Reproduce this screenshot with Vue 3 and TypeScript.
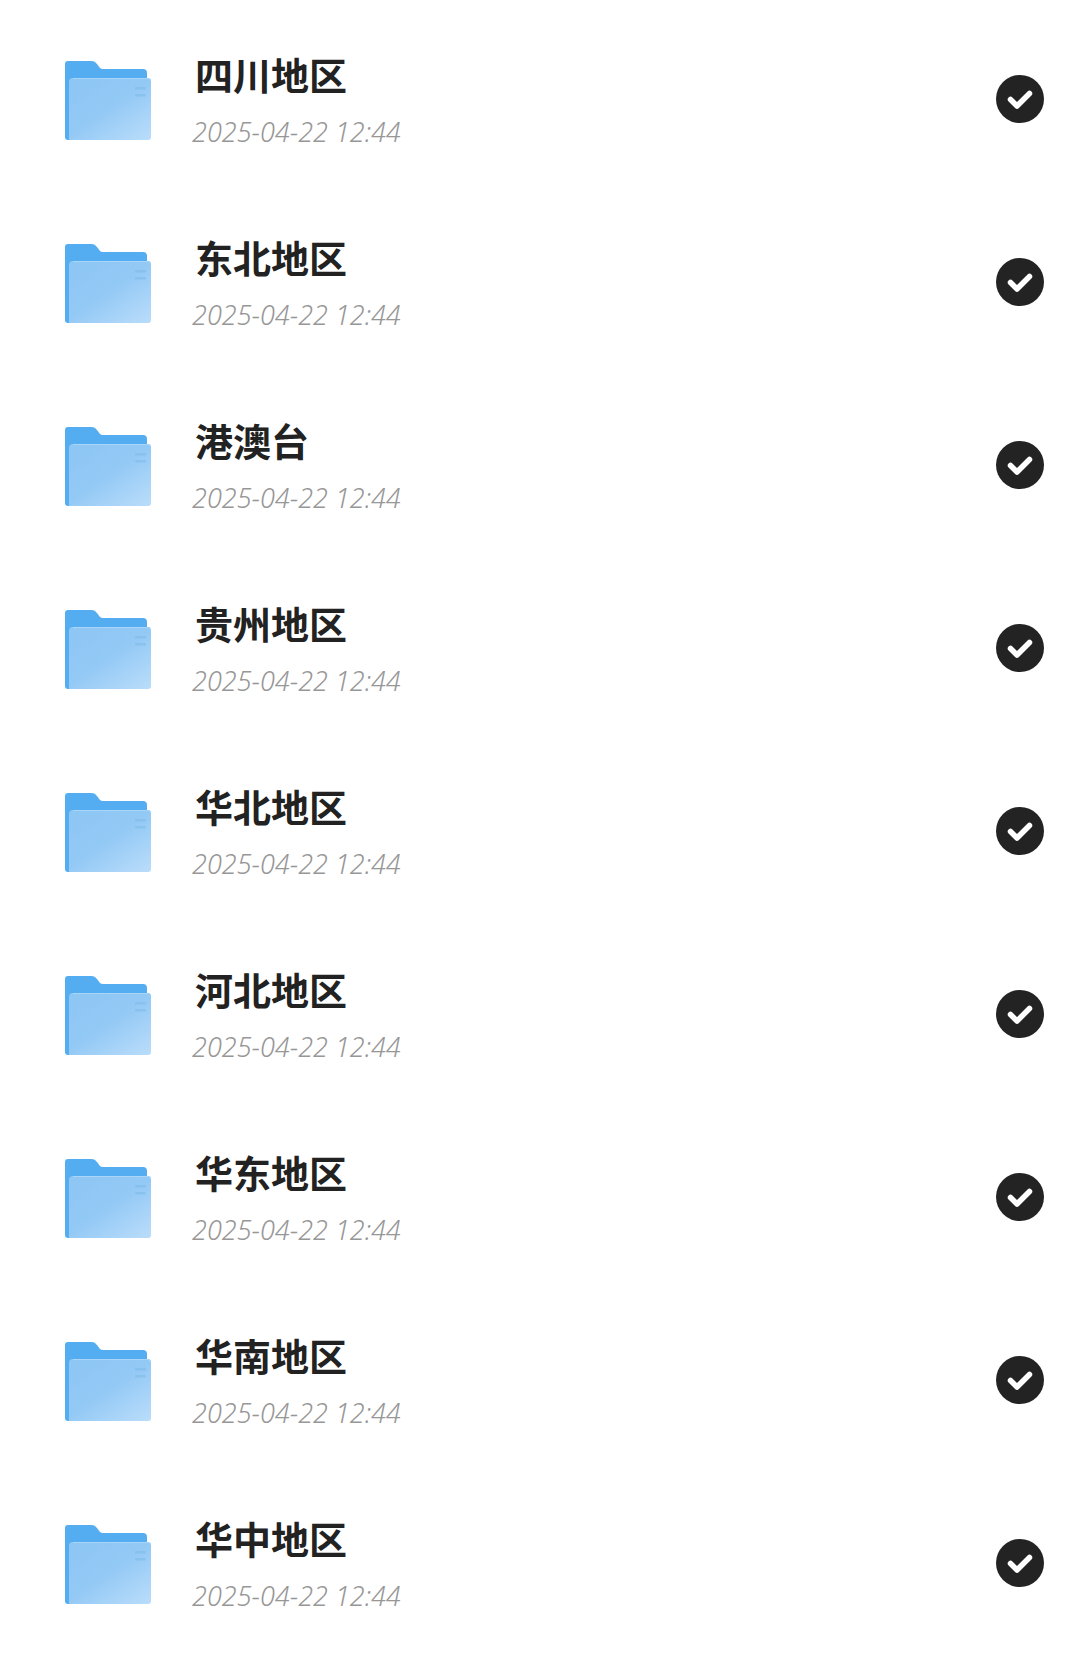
<script setup lang="ts">
interface Region {
  name: string
  time: string
}

const regions: Region[] = ['四川地区', '东北地区', '港澳台', '贵州地区', '华北地区', '河北地区', '华东地区', '华南地区', '华中地区'].map(
  (name) => ({ name, time: '2025-04-22 12:44' }),
)
</script>

<template>
  <ul class="region-list">
    <li v-for="item in regions" :key="item.name" class="region">
      <svg class="folder" viewBox="0 0 86 80" aria-hidden="true">
        <defs>
          <linearGradient id="folder-front" x1="0.1" y1="0.1" x2="0.9" y2="1">
            <stop offset="0" stop-color="#8ec6f4" />
            <stop offset="0.45" stop-color="#93c9f5" />
            <stop offset="1" stop-color="#b7dbfa" />
          </linearGradient>
        </defs>
        <path
          d="M3 0H27Q30 0 32 3L35 7Q36 8 38 8H78Q82 8 82 12V20H4V77Q0 77 0 74V3Q0 0 3 0Z"
          fill="#55adf1"
        />
        <path d="M0 18H5V79H3Q0 79 0 76Z" fill="#55adf1" />
        <path
          d="M8 17H83Q86 17 86 20V76Q86 79 83 79H4V21Q4 17 8 17Z"
          fill="url(#folder-front)"
        />
        <path d="M8 17.5H83Q85.5 17.5 85.5 20" fill="none" stroke="#a9d5f8" stroke-width="1" />
        <rect x="70" y="26" width="11" height="2.5" rx="1" fill="#7db9e8" opacity="0.55" />
        <rect x="70" y="33" width="11" height="2.5" rx="1" fill="#7db9e8" opacity="0.55" />
      </svg>
      <div class="info">
        <span class="name">{{ item.name }}</span>
        <span class="time">{{ item.time }}</span>
      </div>
      <svg class="check" viewBox="0 0 48 48" aria-hidden="true">
        <circle cx="24" cy="24" r="24" fill="#232323" />
        <path
          d="M14.5 24.5L21 31L33.5 18.5"
          fill="none"
          stroke="#fff"
          stroke-width="5.5"
          stroke-linecap="round"
          stroke-linejoin="round"
        />
      </svg>
    </li>
  </ul>
</template>

<style scoped>
.region-list {
  list-style: none;
  margin: 0;
  padding: 8px 0 0;
}

.region {
  display: flex;
  align-items: center;
  height: 183px;
  padding: 0 36px 0 65px;
  box-sizing: border-box;
}

.folder {
  width: 86px;
  height: 80px;
  flex: none;
  margin-top: 2px;
}

.info {
  display: flex;
  flex-direction: column;
  gap: 20px;
  margin-left: 43px;
  flex: 1;
  min-width: 0;
}

.name {
  font-family: "Noto Sans CJK SC", sans-serif;
  font-size: 38px;
  font-weight: 700;
  line-height: 44px;
  color: #222;
  margin-left: 1px;
}

.time {
  font-family: "Noto Sans", sans-serif;
  font-size: 27px;
  font-weight: 300;
  font-style: italic;
  line-height: 32px;
  color: #979797;
  margin-left: -2px;
}

.check {
  width: 48px;
  height: 48px;
  flex: none;
  margin-bottom: 2px;
}
</style>
